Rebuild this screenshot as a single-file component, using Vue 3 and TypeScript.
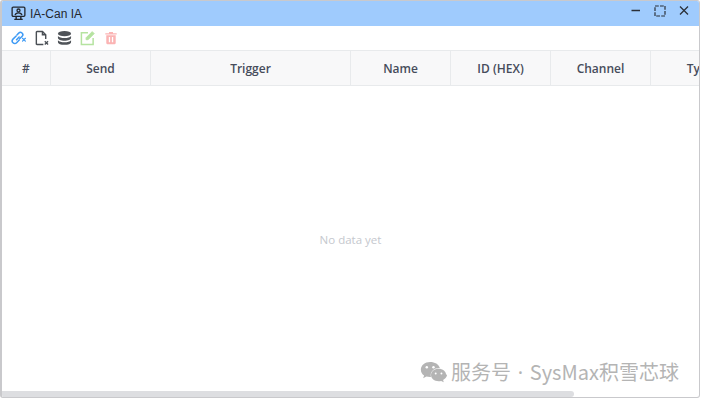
<script setup lang="ts">
const columns: { label: string; width: number }[] = [
  { label: '#', width: 49 },
  { label: 'Send', width: 100 },
  { label: 'Trigger', width: 200 },
  { label: 'Name', width: 100 },
  { label: 'ID (HEX)', width: 100 },
  { label: 'Channel', width: 100 },
  { label: 'Type', width: 100 },
]
</script>

<template>
  <div class="window">
    <header class="titlebar">
      <svg class="app-icon" viewBox="0 0 16 16" fill="none" stroke="#23272e" stroke-width="1.400">
        <rect x="1.200" y="1.200" width="13.600" height="9.800" rx="1.200" />
        <circle cx="8" cy="4.800" r="1.600" />
        <path d="M4.400 9.800c.4-1.800 1.900-2.400 3.600-2.400s3.200.6 3.600 2.400" />
        <path d="M3.500 14.300h9M5.500 11v3.300M10.500 11v3.300" stroke-width="1.500" />
      </svg>
      <span class="title">IA-Can IA</span>
      <div class="controls">
        <svg class="ctl" viewBox="0 0 12 12" stroke="#2b3038" fill="none"><path d="M1.500 5.500h8.500" stroke-width="1.500" /></svg>
        <svg class="ctl" viewBox="0 0 12 12" stroke="#2b3038" fill="none"><rect x="1" y="1" width="10" height="10" stroke-width="1.200" stroke-dasharray="3.800 1.200" /></svg>
        <svg class="ctl" viewBox="0 0 12 12" stroke="#2b3038" fill="none"><path d="M2 1.500l8 8M10 1.500l-8 8" stroke-width="1.300" /></svg>
      </div>
    </header>

    <div class="toolbar">
      <svg class="tool" viewBox="0 0 16 16" fill="none" stroke="#3f9bf5" stroke-width="1.600" stroke-linecap="round">
        <path d="M6.300 4.700l1.900-1.900a2.500 2.500 0 0 1 3.700 3.400l-2.700 2.700" />
        <path d="M5.500 5.800l-3.400 3.400a2.700 2.700 0 0 0 3.900 3.800l2.800-2.800" />
        <path d="M5.900 9.800l2.800-2.800" />
        <path d="M12.300 8.300l3 3M15.300 8.300l-3 3" stroke-width="1.300" />
      </svg>
      <svg class="tool" viewBox="0 0 16 16" fill="none" stroke="#4a4f55" stroke-width="1.500">
        <path d="M10 15H3.200a.7.700 0 0 1-.7-.7V1.700a.7.700 0 0 1 .7-.7H9l3.500 3.500V9" />
        <path d="M9 1v3.500h3.500" />
        <path d="M11.500 11.500l3.500 3.500M15 11.500l-3.500 3.500" stroke-width="1.400" />
      </svg>
      <svg class="tool" viewBox="0 0 16 16" fill="#4f5358">
        <ellipse cx="8" cy="3.400" rx="7" ry="2.800" />
        <path d="M1 5.900c1.200 1.500 3.900 2.200 7 2.200s5.800-.7 7-2.200v2.100c0 1.600-3.100 2.900-7 2.900S1 9.600 1 8z" />
        <path d="M1 10.300c1.200 1.500 3.900 2.200 7 2.200s5.800-.7 7-2.200v2.100c0 1.600-3.100 2.900-7 2.900s-7-1.300-7-2.900z" />
      </svg>
      <svg class="tool" viewBox="0 0 16 16" fill="none" stroke="#b5e3a0" stroke-width="1.600">
        <path d="M8.500 2.500H1.500v12.500h12.500V8" />
        <path d="M6.500 9.800V7.700L13 1.200l2.100 2.100-6.500 6.500z" fill="#b5e3a0" stroke-width="1" />
      </svg>
      <svg class="tool trash" viewBox="0 0 16 16" fill="#fbb4b4">
        <path d="M1.500 2.600h4.200V1.200h4.600v1.400h4.200V4h-13z" />
        <path fill-rule="evenodd" d="M2.600 4.800h10.800v9a1.200 1.200 0 0 1-1.200 1.200H3.800a1.200 1.200 0 0 1-1.200-1.200zM5.500 6.800v6h1.500v-6zM9 6.800v6h1.500v-6z" />
      </svg>
    </div>

    <div class="table">
      <div class="thead">
        <div v-for="c in columns" :key="c.label" class="th" :style="{ width: c.width + 'px' }">{{ c.label }}</div>
      </div>
      <div class="tbody">
        <span class="empty">No data yet</span>
      </div>
      <div class="scrollbar"><div class="thumb"></div></div>
    </div>

    <div class="watermark">
      <svg class="wechat" viewBox="0 0 28 24" fill="#b4b4b4">
        <path d="M10.500 1C5 1 .8 4.500.8 9c0 2.500 1.300 4.600 3.400 6.100L3.200 18l3.400-1.700c1.200.3 2.400.5 3.900.5h.9a7 7 0 0 1-.3-2c0-4.200 3.900-7.500 8.700-7.500h.8C19.600 3.400 15.400 1 10.500 1z" />
        <path d="M27.200 14.700c0-3.700-3.600-6.500-7.900-6.500s-7.900 2.800-7.900 6.500 3.600 6.500 7.900 6.500c1 0 1.800-.1 2.700-.4l2.700 1.500-.7-2.500c2.400-1.300 4.200-3.500 4.200-6.100z" />
        <circle cx="7" cy="6.500" r="1.300" fill="#fff" />
        <circle cx="14" cy="6.500" r="1.300" fill="#fff" />
        <circle cx="16.300" cy="13" r="1" fill="#fff" />
        <circle cx="22.300" cy="13" r="1" fill="#fff" />
      </svg>
      <span class="wm-text">服务号<span class="wm-dot"> · </span>SysMax积雪芯球</span>
    </div>
  </div>
</template>

<style>
html, body { margin: 0; background: #fff; }
</style>

<style scoped>
.window {
  position: relative;
  box-sizing: border-box;
  width: 700px;
  height: 398px;
  border: 1px solid #c9c9cc;
  border-left-width: 2px;
  border-radius: 3px;
  background: #fff;
  overflow: hidden;
  font-family: "Open Sans", "Liberation Sans", sans-serif;
  display: flex;
  flex-direction: column;
}
.titlebar {
  height: 25px;
  flex: none;
  background: #9fcbfd;
  display: flex;
  align-items: center;
  padding: 0 9px;
}
.app-icon { width: 15px; height: 15px; margin-right: 4px; }
.title { font-size: 12px; color: #23272e; font-family: "Liberation Sans", sans-serif; }
.controls { margin-left: auto; display: flex; gap: 12px; align-items: center; margin-top: -5px; }
.ctl { width: 12px; height: 12px; }
.toolbar {
  height: 24px;
  flex: none;
  display: flex;
  align-items: center;
  gap: 8px;
  padding-left: 9px;
}
.tool { width: 15px; height: 16px; }
.trash { margin-left: 1px; width: 14px; }
.table {
  flex: 1;
  min-height: 0;
  display: flex;
  flex-direction: column;
  overflow: hidden;
}
.thead {
  height: 36px;
  flex: none;
  display: flex;
  background: #f8f8f9;
  border-top: 1px solid #e8eaec;
  border-bottom: 1px solid #e8eaec;
  box-sizing: border-box;
}
.th {
  flex: none;
  box-sizing: border-box;
  border-right: 1px solid #e8eaec;
  display: flex;
  align-items: center;
  justify-content: center;
  font-size: 12px;
  font-weight: 600;
  color: #464c5b;
}
.tbody {
  flex: 1;
  display: flex;
  align-items: center;
  justify-content: center;
  padding-top: 2px;
}
.empty { font-size: 11.500px; color: #c5c8ce; }
.scrollbar { height: 6px; flex: none; }
.thumb { width: 572px; height: 6px; background: #dddee1; border-radius: 0 3px 3px 0; }
.watermark {
  position: absolute;
  left: 418px;
  top: 356px;
  display: flex;
  align-items: center;
  gap: 4px;
}
.wechat { width: 27px; height: 23px; margin-top: 2px; }
.wm-text {
  font-size: 20px;
  color: #b4b4b4;
  font-family: "Noto Sans CJK SC", sans-serif;
  white-space: pre;
}
.wm-dot {
  font-family: "Noto Sans", sans-serif;
  word-spacing: 1.500px;
}
</style>
